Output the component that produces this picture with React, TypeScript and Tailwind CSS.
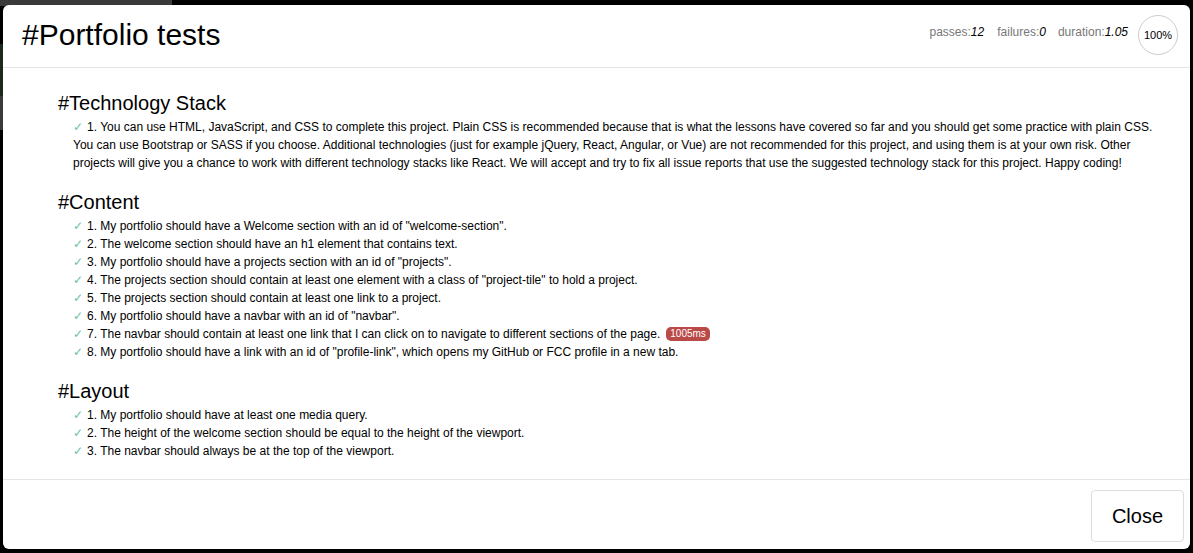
import React from "react";

const tech = [
  "1. You can use HTML, JavaScript, and CSS to complete this project. Plain CSS is recommended because that is what the lessons have covered so far and you should get some practice with plain CSS. You can use Bootstrap or SASS if you choose. Additional technologies (just for example jQuery, React, Angular, or Vue) are not recommended for this project, and using them is at your own risk. Other projects will give you a chance to work with different technology stacks like React. We will accept and try to fix all issue reports that use the suggested technology stack for this project. Happy coding!",
];
const content = [
  '1. My portfolio should have a Welcome section with an id of "welcome-section".',
  "2. The welcome section should have an h1 element that contains text.",
  '3. My portfolio should have a projects section with an id of "projects".',
  '4. The projects section should contain at least one element with a class of "project-tile" to hold a project.',
  "5. The projects section should contain at least one link to a project.",
  '6. My portfolio should have a navbar with an id of "navbar".',
  "7. The navbar should contain at least one link that I can click on to navigate to different sections of the page.",
  '8. My portfolio should have a link with an id of "profile-link", which opens my GitHub or FCC profile in a new tab.',
];
const layout = [
  "1. My portfolio should have at least one media query.",
  "2. The height of the welcome section should be equal to the height of the viewport.",
  "3. The navbar should always be at the top of the viewport.",
];

function Item({ text, slow }: { text: string; slow?: string }) {
  return (
    <li className="text-[12px] leading-[18px] text-black">
      <span className="inline-block w-[14px] text-[#6cc4a0]">✓</span>
      {text}
      {slow && (
        <span className="ml-[6px] inline-block rounded-[5px] bg-[#b94a48] px-[4px] text-[10px] leading-[14px] text-white align-[1px]">
          {slow}
        </span>
      )}
    </li>
  );
}

function Section({ title, items, slowIdx }: { title: string; items: string[]; slowIdx?: number }) {
  return (
    <div>
      <h2 className="text-[20px] leading-[22px] text-black">{title}</h2>
      <ul className="mt-[4px] pl-[15px]">
        {items.map((t, i) => (
          <Item key={i} text={t} slow={i === slowIdx ? "1005ms" : undefined} />
        ))}
      </ul>
    </div>
  );
}

export default function App() {
  return (
    <div
      className="relative w-[1193px] h-[553px] bg-black overflow-hidden"
      style={{ fontFamily: '"Liberation Sans", Arial, sans-serif' }}
    >
      <div className="absolute left-0 top-0 w-[172px] h-[6px] bg-[#3a3a3a]" />
      <div className="absolute left-0 top-[44px] w-[6px] h-[52px] bg-[#1c2a1c]" />
      <div className="absolute left-0 top-[96px] w-[6px] h-[34px] bg-[#3a3a3a]" />
      <div className="absolute left-[3px] top-[5px] w-[1187px] h-[544px] bg-white rounded-[6px] flex flex-col">
        <div className="h-[63px] border-b border-[#e5e5e5] flex items-center justify-between pl-[19px] pr-[12px] shrink-0">
          <h1 className="text-[30px] leading-[34px] text-black mt-[-2px]">#Portfolio tests</h1>
          <div className="flex items-center text-[12px] text-[#777] mt-[-2px]">
            <span className="mr-[13px] mt-[-6px]">
              passes:<em className="text-black">12</em>
            </span>
            <span className="mr-[12px] mt-[-6px]">
              failures:<em className="text-black">0</em>
            </span>
            <span className="mr-[10px] mt-[-6px]">
              duration:<em className="text-black">1.05</em>
            </span>
            <div className="w-[40px] h-[40px] rounded-full border border-[#ccc] flex items-center justify-center text-[11px] text-black">
              100%
            </div>
          </div>
        </div>
        <div className="flex-1 pl-[55px] pr-[28px] pt-[24px] flex flex-col gap-[19px]">
          <Section title="#Technology Stack" items={tech} />
          <Section title="#Content" items={content} slowIdx={6} />
          <Section title="#Layout" items={layout} />
        </div>
        <div className="h-[70px] border-t border-[#e5e5e5] flex items-center justify-end pr-[6px] shrink-0">
          <button className="w-[93px] h-[52px] mt-[2px] border border-[#ddd] rounded-[4px] bg-white text-[20px] text-black">
            Close
          </button>
        </div>
      </div>
    </div>
  );
}
